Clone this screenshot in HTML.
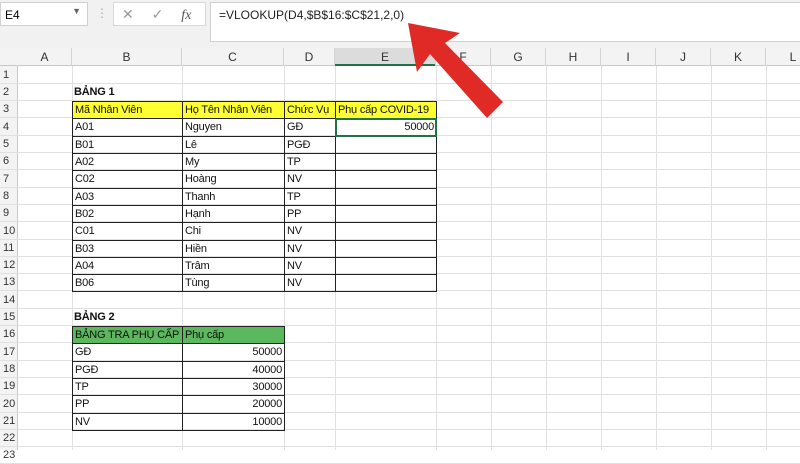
<!DOCTYPE html>
<html><head><meta charset="utf-8"><style>
body{margin:0;width:800px;height:450px;overflow:hidden;background:#fff;font-family:"Liberation Sans",sans-serif;position:relative}
.a{position:absolute;box-sizing:border-box}
.t{font-size:11px;line-height:16px;padding:0 2px;white-space:nowrap;color:#111;overflow:hidden;letter-spacing:-0.2px}
</style></head><body>
<div class="a" style="left:0;top:0;width:800px;height:48px;background:#f1f1f1"></div>
<div class="a" style="left:0;top:2px;width:88px;height:24px;background:#fff;border:1px solid #d0d0d0;font-size:12px;padding:5px 4px">E4<span style="position:absolute;right:6px;top:3px;font-size:9px;color:#666">▼</span></div>
<div class="a" style="left:96px;top:6px;color:#aaa;font-size:12px">⋮</div>
<div class="a" style="left:113px;top:2px;width:93px;height:24px;background:#fff;border:1px solid #d8d8d8;font-size:14px;color:#999;padding:3px 8px;word-spacing:14px">✕ ✓ <i style="font-family:'Liberation Serif';color:#555">fx</i></div>
<div class="a" style="left:210px;top:2px;width:592px;height:40px;background:#fff;border:1px solid #d0d0d0;font-size:12px;padding:5px 8px;color:#222">=VLOOKUP(D4,$B$16:$C$21,2,0)</div>
<div id="g"></div>
<svg class="a" style="left:0;top:0" width="800" height="450"><polygon points="408,23 460,33 445,43 503,102 487,118 430,54 417,72" fill="#e02a26"/></svg>
<script>
var cols=[18,72,182,284,335,436,491,546,601,656,711,766,821],L="ABCDEFGHIJKL",h=17.3,top0=66.5,s="";
function Y(r){return Math.round(top0+(r-1)*h);}
s+='<div class="a" style="left:0;top:48px;width:800px;height:18px;background:#f3f3f3;border-bottom:1px solid #c8c8c8"></div>';
s+='<div class="a" style="left:335px;top:48px;width:101px;height:18px;background:#dcdcdc;border-bottom:2px solid #217346"></div>';
for(var i=0;i<12;i++){s+='<div class="a" style="left:'+cols[i]+'px;top:48px;width:'+(cols[i+1]-cols[i])+'px;height:18px;border-right:1px solid #d4d4d4;text-align:center;font-size:12px;line-height:18px;color:#333">'+L[i]+'</div>';}
s+='<div class="a" style="left:0;top:66px;width:18px;height:384px;background:#f3f3f3;border-right:1px solid #c8c8c8"></div>';
for(var r=1;r<=23;r++){var y=Y(r),hh=Y(r+1)-y;s+='<div class="a" style="left:0;top:'+y+'px;width:800px;height:'+hh+'px;border-bottom:1px solid #e0e0e0"></div><div class="a" style="left:0;top:'+y+'px;width:18px;font-size:11px;line-height:'+hh+'px;padding-left:3px;color:#333">'+r+'</div>';}
for(var i=1;i<12;i++)s+='<div class="a" style="left:'+cols[i]+'px;top:66px;width:1px;height:384px;background:#e0e0e0"></div>';
function cell(r,c,txt,o){o=o||{};var y=Y(r),hh=Y(r+1)-y;s+='<div class="a t" style="left:'+cols[c]+'px;top:'+y+'px;width:'+(cols[c+1]-cols[c]+1)+'px;height:'+(hh+1)+'px;line-height:'+(hh-1)+'px;'+(o.b?'border:1px solid #222;':'')+(o.bg?'background:'+o.bg+';':'')+(o.r?'text-align:right;':'')+(o.bold?'font-weight:bold;':'')+'">'+txt+'</div>';}
cell(2,1,'BẢNG 1',{bold:1});
var hd=['Mã Nhân Viên','Họ Tên Nhân Viên','Chức Vụ','Phụ cấp COVID-19'];
for(var c=0;c<4;c++)cell(3,c+1,hd[c],{b:1,bg:'#ffff33'});
var d=[['A01','Nguyen','GĐ'],['B01','Lê','PGĐ'],['A02','My','TP'],['C02','Hoàng','NV'],['A03','Thanh','TP'],['B02','Hạnh','PP'],['C01','Chi','NV'],['B03','Hiền','NV'],['A04','Trâm','NV'],['B06','Tùng','NV']];
for(var k=0;k<10;k++){for(var c=0;c<3;c++)cell(4+k,c+1,d[k][c],{b:1});cell(4+k,4,k==0?'50000':'',{b:1,r:1});}
s+='<div class="a" style="left:335px;top:'+Y(4)+'px;width:102px;height:'+(Y(5)-Y(4)+1)+'px;border:2px solid #217346"></div>';
cell(15,1,'BẢNG 2',{bold:1});
cell(16,1,'BẢNG TRA PHỤ CẤP',{b:1,bg:'#5cb85c'});cell(16,2,'Phụ cấp',{b:1,bg:'#5cb85c'});
var e=[['GĐ','50000'],['PGĐ','40000'],['TP','30000'],['PP','20000'],['NV','10000']];
for(var k=0;k<5;k++){cell(17+k,1,e[k][0],{b:1});cell(17+k,2,e[k][1],{b:1,r:1});}
document.getElementById('g').innerHTML=s;
</script>
</body></html>
